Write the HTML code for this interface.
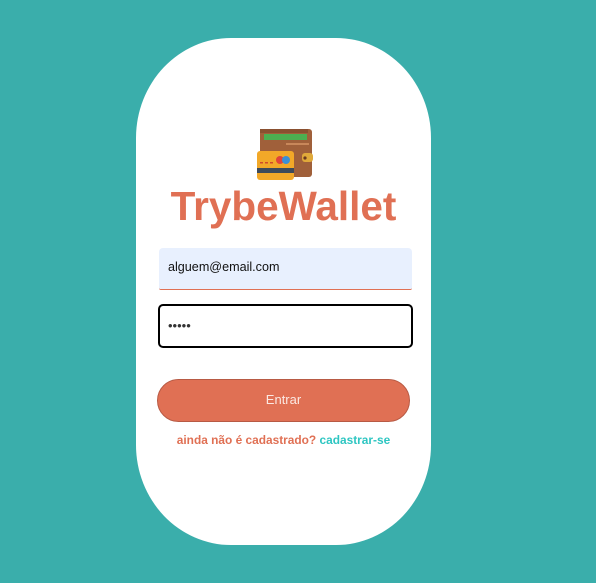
<!DOCTYPE html>
<html><head><meta charset="utf-8"><style>
body{margin:0;width:596px;height:583px;background:#3aaeab;position:relative;overflow:hidden;font-family:"Liberation Sans",sans-serif}
.card{position:absolute;left:136px;top:38px;width:295px;height:507px;background:#fff;border-radius:95px/100px}
.t{position:absolute;left:136px;width:295px;top:183px;text-align:center;font-weight:bold;font-size:40.5px;color:#e07054}
.in1{position:absolute;left:159px;top:248px;width:253px;height:42px;background:#e8f0fe;border-radius:4px 4px 2px 2px;border-bottom:1px solid #e07054;box-sizing:border-box;font-size:12.6px;color:#111;padding:12px 9px}
.in2{position:absolute;left:158px;top:304px;width:255px;height:44px;border:2px solid #000;border-radius:5px;box-sizing:border-box;font-size:13px;color:#333;padding:12px 8px}
.btn{position:absolute;left:157px;top:379px;width:253px;height:43px;background:#e07054;border-radius:22px;box-sizing:border-box;border:1px solid #b85a44;color:#fbe8e2;font-size:13px;text-align:center;line-height:40px}
.lk{position:absolute;left:136px;width:295px;top:433px;text-align:center;font-size:11.9px;font-weight:bold;color:#e07054}
.lk span{color:#2ec6c2}
</style></head><body>
<div class="card"></div>
<svg style="position:absolute;left:256px;top:128px" width="57" height="54" viewBox="0 0 57 54">
<rect x="4" y="1" width="52" height="48" rx="3" fill="#a0603a"/>
<rect x="8" y="6" width="43" height="6" fill="#4caf50"/>
<rect x="4" y="1" width="48" height="4" fill="#8a5030"/>
<rect x="30" y="15" width="23" height="2" fill="#c8875a"/>
<rect x="46" y="25" width="11" height="9" rx="3" fill="#e0a93a"/>
<circle cx="49" cy="30" r="1.6" fill="#6a3a20"/>
<rect x="1" y="23" width="37" height="29" rx="3" fill="#f2a828"/>
<rect x="1" y="40" width="37" height="5" fill="#3d4a5a"/>
<circle cx="24" cy="32" r="4" fill="#e0443a"/>
<circle cx="30" cy="32" r="4" fill="#3b8fd6"/>
<rect x="4" y="34" width="3" height="1.5" fill="#d04a2a"/><rect x="9" y="34" width="3" height="1.5" fill="#d04a2a"/><rect x="14" y="34" width="3" height="1.5" fill="#d04a2a"/>
</svg>
<div class="t">TrybeWallet</div>
<div class="in1">alguem@email.com</div>
<div class="in2">•••••</div>
<div class="btn">Entrar</div>
<div class="lk">ainda não é cadastrado? <span>cadastrar-se</span></div>
</body></html>
